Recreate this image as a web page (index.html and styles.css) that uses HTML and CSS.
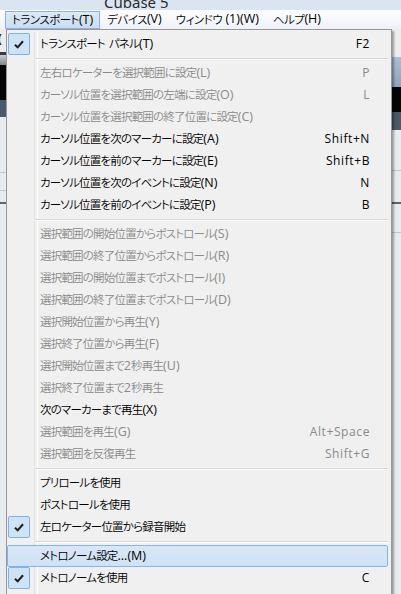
FILE: index.html
```html
<!DOCTYPE html>
<html lang="ja">
<head>
<meta charset="utf-8">
<title>Cubase 5</title>
<link rel="stylesheet" href="styles.css">
</head>
<body>
<div class="screen">
  <div class="titlebar"><span class="title">Cubase 5</span></div>
  <div class="menubar">
    <span class="mb-item active">トランスポート<span class="mn">(T)</span></span>
    <span class="mb-item">デバイス<span class="mn">(V)</span></span>
    <span class="mb-item">ウィンドウ<span class="mn"> (1)(W)</span></span>
    <span class="mb-item">ヘルプ<span class="mn">(H)</span></span>
  </div>
  <div class="app">
    <div class="strip strip-left">
      <div class="band b-top"><span class="paren">(</span></div>
      <div class="band b-edge"></div>
      <div class="band b-grad"></div>
      <div class="band b-black"></div>
      <div class="band b-slate"></div>
      <div class="band b-light h55"></div>
      <div class="band b-line"></div>
      <div class="band b-light h17"></div>
      <div class="band b-line"></div>
      <div class="band b-light h11"></div>
      <div class="band b-dark"></div>
      <div class="band b-light fill"></div>
    </div>
    <div class="strip-gap"></div>
    <div class="strip strip-right">
      <div class="band b-top h28"></div>
      <div class="band b-blue"></div>
      <div class="band b-black h25"></div>
      <div class="band b-slate h18"></div>
      <div class="band b-light h40"></div>
      <div class="band b-line"></div>
      <div class="band b-light h31"></div>
      <div class="band b-dark"></div>
      <div class="band b-light h28"></div>
      <div class="band b-line"></div>
      <div class="band b-light fill"></div>
    </div>
  </div>

  <div class="menu">
    <div class="item checked"><span class="chk"><svg viewBox="0 0 10 9" width="10" height="9"><path d="M1 4.6 L3.6 7.4 L9 1.2" fill="none" stroke="#1f1f1f" stroke-width="2.1" stroke-linejoin="round"/></svg></span><span class="lbl">トランスポート<span class="sp"> </span>パネル<span class="mn">(T)</span></span><span class="key">F2</span></div>
    <div class="sep"></div>
    <div class="item dis"><span class="chk"></span><span class="lbl">左右ロケーターを選択範囲に設定<span class="mn">(L)</span></span><span class="key">P</span></div>
    <div class="item dis"><span class="chk"></span><span class="lbl">カーソル位置を選択範囲の左端に設定<span class="mn">(O)</span></span><span class="key">L</span></div>
    <div class="item dis"><span class="chk"></span><span class="lbl">カーソル位置を選択範囲の終了位置に設定<span class="mn">(C)</span></span><span class="key"></span></div>
    <div class="item"><span class="chk"></span><span class="lbl">カーソル位置を次のマーカーに設定<span class="mn">(A)</span></span><span class="key">Shift+N</span></div>
    <div class="item"><span class="chk"></span><span class="lbl">カーソル位置を前のマーカーに設定<span class="mn">(E)</span></span><span class="key">Shift+B</span></div>
    <div class="item"><span class="chk"></span><span class="lbl">カーソル位置を次のイベントに設定<span class="mn">(N)</span></span><span class="key">N</span></div>
    <div class="item"><span class="chk"></span><span class="lbl">カーソル位置を前のイベントに設定<span class="mn">(P)</span></span><span class="key">B</span></div>
    <div class="sep"></div>
    <div class="item dis"><span class="chk"></span><span class="lbl">選択範囲の開始位置からポストロール<span class="mn">(S)</span></span><span class="key"></span></div>
    <div class="item dis"><span class="chk"></span><span class="lbl">選択範囲の終了位置からポストロール<span class="mn">(R)</span></span><span class="key"></span></div>
    <div class="item dis"><span class="chk"></span><span class="lbl">選択範囲の開始位置までポストロール<span class="mn">(I)</span></span><span class="key"></span></div>
    <div class="item dis"><span class="chk"></span><span class="lbl">選択範囲の終了位置までポストロール<span class="mn">(D)</span></span><span class="key"></span></div>
    <div class="item dis"><span class="chk"></span><span class="lbl">選択開始位置から再生<span class="mn">(Y)</span></span><span class="key"></span></div>
    <div class="item dis"><span class="chk"></span><span class="lbl">選択終了位置から再生<span class="mn">(F)</span></span><span class="key"></span></div>
    <div class="item dis"><span class="chk"></span><span class="lbl">選択開始位置まで<span class="mn">2</span>秒再生<span class="mn">(U)</span></span><span class="key"></span></div>
    <div class="item dis"><span class="chk"></span><span class="lbl">選択終了位置まで<span class="mn">2</span>秒再生</span><span class="key"></span></div>
    <div class="item"><span class="chk"></span><span class="lbl">次のマーカーまで再生<span class="mn">(X)</span></span><span class="key"></span></div>
    <div class="item dis"><span class="chk"></span><span class="lbl">選択範囲を再生<span class="mn">(G)</span></span><span class="key">Alt+Space</span></div>
    <div class="item dis"><span class="chk"></span><span class="lbl">選択範囲を反復再生</span><span class="key">Shift+G</span></div>
    <div class="sep"></div>
    <div class="item"><span class="chk"></span><span class="lbl">プリロールを使用</span><span class="key"></span></div>
    <div class="item"><span class="chk"></span><span class="lbl">ポストロールを使用</span><span class="key"></span></div>
    <div class="item checked"><span class="chk"><svg viewBox="0 0 10 9" width="10" height="9"><path d="M1 4.6 L3.6 7.4 L9 1.2" fill="none" stroke="#1f1f1f" stroke-width="2.1" stroke-linejoin="round"/></svg></span><span class="lbl">左ロケーター位置から録音開始</span><span class="key"></span></div>
    <div class="sep"></div>
    <div class="item hot"><span class="chk"></span><span class="lbl">メトロノーム設定<span class="mn">...(M)</span></span><span class="key"></span></div>
    <div class="item checked"><span class="chk"><svg viewBox="0 0 10 9" width="10" height="9"><path d="M1 4.6 L3.6 7.4 L9 1.2" fill="none" stroke="#1f1f1f" stroke-width="2.1" stroke-linejoin="round"/></svg></span><span class="lbl">メトロノームを使用</span><span class="key">C</span></div>
    <div class="item"><span class="chk"></span><span class="lbl">プリカウントを使用</span><span class="key"></span></div>
  </div>
</div>
</body>
</html>
```

FILE: styles.css
```css
* { box-sizing: border-box; }
html, body { margin: 0; padding: 0; }
body {
  width: 401px;
  height: 594px;
  overflow: hidden;
  background: #e9ecee;
  font-family: "Noto Sans CJK JP", "Noto Sans", sans-serif;
  font-size: 11.5px;
  font-weight: 350;
  font-feature-settings: "palt";
  color: #000;
}
.screen {
  position: relative;
  width: 401px;
  height: 594px;
  overflow: hidden;
  display: flex;
  flex-direction: column;
}
.titlebar {
  height: 10px;
  flex: none;
  overflow: hidden;
  background: #dbe5f1;
  display: flex;
  justify-content: flex-start;
}
.title {
  margin-left: 104px;
  margin-top: -8px;
  font-family: "Noto Sans", "DejaVu Sans", sans-serif;
  font-size: 15px;
  font-weight: 400;
  line-height: 20px;
  color: #2a2a2a;
  font-feature-settings: normal;
}
.menubar {
  height: 19px;
  flex: none;
  display: flex;
  align-items: stretch;
  padding-left: 5px;
  background: linear-gradient(#fdfeff, #eef2f8);
}
.mb-item {
  display: flex;
  align-items: center;
  padding: 0 6px 0 6px;
  border: 1px solid transparent;
  line-height: 1;
  white-space: pre;
  letter-spacing: -0.5px;
}
.mb-item.active {
  background: linear-gradient(#dce9f7, #c9ddf3);
  border-color: #8db2e2;
  margin-top: 1px;
}
.mn {
  font-family: "Open Sans", "Noto Sans", sans-serif;
  font-weight: 400;
  font-size: 12.5px;
  letter-spacing: 0;
  white-space: pre;
}

.app {
  flex: 1;
  display: flex;
}
.strip { display: flex; flex-direction: column; overflow: hidden; }
.strip-left { width: 8px; }
.strip-gap { flex: 1; background: #e9ecee; }
.strip-right { width: 10px; }
.band { flex: none; }
.b-top { height: 23px; background: #ececec; position: relative; }
.paren { display: block; margin-left: -2px; margin-top: 2px; font-size: 13px; line-height: 14px; font-family: "Noto Sans", sans-serif; font-weight: 400; }
.b-edge { height: 3px; background: #3a3a3a; }
.b-grad { height: 10px; background: linear-gradient(#c9cdd2, #7d858e); }
.b-black { height: 35px; background: #050505; }
.b-slate { height: 17px; background: #4b5866; }
.b-light { background: #e9ecee; }
.b-line { height: 1px; background: #c4c8cc; }
.b-dark { height: 2px; background: #5f6468; }
.b-blue { height: 30px; background: linear-gradient(#aebfd3, #8ea3bd); }
.fill { flex: 1; }
.h55 { height: 55px; }
.h17 { height: 17px; }
.h11 { height: 11px; }
.h28 { height: 28px; }
.h25 { height: 25px; }
.h18 { height: 18px; }
.h40 { height: 40px; }
.h31 { height: 31px; }

.menu {
  position: absolute;
  left: 6px;
  top: 29px;
  width: 386px;
  height: 600px;
  background: #f0f0f0;
  border: 1px solid #979797;
  box-shadow: 2px 2px 2px rgba(0, 0, 0, 0.35);
  padding: 2px 3px 2px 1px;
}
.menu::before {
  content: "";
  position: absolute;
  top: 2px;
  bottom: 0;
  left: 27px;
  width: 2px;
  border-left: 1px solid #e2e3e3;
  border-right: 1px solid #ffffff;
}
.item {
  position: relative;
  height: 22px;
  display: grid;
  grid-template-columns: 22px 1fr auto;
  column-gap: 10px;
  align-items: center;
  padding-right: 17px;
  border: 1px solid transparent;
  border-left: 0;
  border-radius: 2px;
  white-space: nowrap;
  line-height: 1;
}
.item:first-child { margin-top: 1px; }
.item.dis { color: #8a8a8a; }
.lbl { letter-spacing: -0.8px; }
.sp { display: inline-block; width: 4px; }
.key {
  text-align: right;
  font-family: "Open Sans", "Noto Sans", sans-serif;
  font-weight: 400;
  font-size: 12px;
  letter-spacing: 0.6px;
}
.chk {
  height: 22px;
  margin-top: -1px;
  margin-bottom: -1px;
  display: flex;
  align-items: center;
  justify-content: center;
}
.checked .chk {
  background: #cfe3f7;
  border: 1px solid #7eb1e5;
  border-radius: 2px;
}
.item.hot {
  background: linear-gradient(#d8e7f6, #cfe2f5);
  border: 1px solid #85b4e8;
  margin-left: -1px;
}
.item.hot .chk { margin-left: 1px; width: 22px; }
.sep {
  height: 7px;
  margin-left: 27px;
  position: relative;
}
.sep::after {
  content: "";
  position: absolute;
  left: 0;
  right: 0;
  top: 3px;
  height: 1px;
  background: #d7d7d7;
  box-shadow: 0 1px 0 #ffffff;
}
```
